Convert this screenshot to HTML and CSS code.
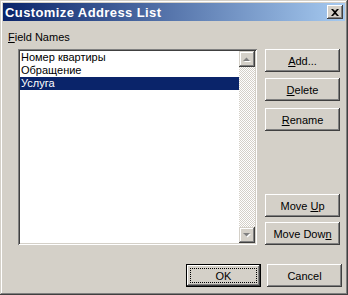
FILE: index.html
```html
<!DOCTYPE html>
<html lang="en">
<head>
    <meta charset="UTF-8">
    <title>Customize Address List</title>
    <link rel="stylesheet" href="styles.css">
</head>
<body>
    <div class="window">
        <div class="titlebar">
            <span class="title">Customize Address List</span>
            <button class="close-btn">
                <svg width="8" height="7" viewBox="0 0 8 7">
                    <path d="M0 0h2l2 2 2-2h2L5 3.5 8 7H6L4 5 2 7H0l3-3.5z" fill="#000"/>
                </svg>
            </button>
        </div>

        <div class="content">
            <div class="label"><u>F</u>ield Names</div>

            <div class="main-row">
                <div class="listbox">
                    <div class="items">
                        <div class="item">Номер квартиры</div>
                        <div class="item">Обращение</div>
                        <div class="item selected">Услуга</div>
                    </div>
                    <div class="scrollbar">
                        <div class="scroll-btn">
                            <svg width="8" height="5" viewBox="0 0 8 5">
                                <path d="M1 5h7L4.5 1.5z" fill="#fff"/>
                                <path d="M0 4h7L3.5 0.5z" fill="#808080"/>
                            </svg>
                        </div>
                        <div class="track"></div>
                        <div class="scroll-btn">
                            <svg width="8" height="5" viewBox="0 0 8 5">
                                <path d="M1 1h7L4.5 4.5z" fill="#fff"/>
                                <path d="M0 0h7L3.5 3.5z" fill="#808080"/>
                            </svg>
                        </div>
                    </div>
                </div>

                <div class="side-buttons">
                    <button class="btn"><u>A</u>dd...</button>
                    <button class="btn btn-delete"><u>D</u>elete</button>
                    <button class="btn btn-rename"><u>R</u>ename</button>
                    <div class="spacer"></div>
                    <button class="btn">Move <u>U</u>p</button>
                    <button class="btn btn-down">Move Dow<u>n</u></button>
                </div>
            </div>

            <div class="bottom-row">
                <button class="btn btn-default"><span class="focus">OK</span></button>
                <button class="btn">Cancel</button>
            </div>
        </div>
    </div>
</body>
</html>
```

FILE: styles.css
```css
* {
    margin: 0;
    padding: 0;
    box-sizing: border-box;
}

body {
    font-family: 'Liberation Sans', Arial, sans-serif;
    font-size: 11px;
    color: #000;
    background: #d4d0c8;
}

.window {
    width: 348px;
    height: 295px;
    padding: 3px;
    background: #d4d0c8;
    box-shadow: inset -1px -1px #404040, inset 1px 1px #d4d0c8,
                inset -2px -2px #808080, inset 2px 2px #fff;
}

.titlebar {
    height: 18px;
    display: flex;
    align-items: center;
    justify-content: space-between;
    padding: 0 2px 0 2px;
    background: linear-gradient(to right, #0a246a, #a6caf0);
}

.title {
    color: #fff;
    font-weight: bold;
    font-size: 13px;
    letter-spacing: 0.4px;
}

.close-btn {
    width: 16px;
    height: 14px;
    border: none;
    background: #d4d0c8;
    display: flex;
    align-items: center;
    justify-content: center;
    box-shadow: inset -1px -1px #404040, inset 1px 1px #fff,
                inset -2px -2px #808080, inset 2px 2px #d4d0c8;
}

.content {
    padding: 0 0 0 5px;
}

.label {
    margin-top: 10px;
    height: 13px;
    line-height: 13px;
}

.label u,
.btn u {
    text-decoration: underline;
    text-underline-offset: 1px;
}

.main-row {
    display: flex;
    margin-top: 5px;
}

.listbox {
    margin-left: 10px;
    width: 239px;
    height: 196px;
    padding: 2px;
    display: flex;
    background: #fff;
    box-shadow: inset 1px 1px #808080, inset -1px -1px #fff,
                inset 2px 2px #404040, inset -2px -2px #d4d0c8;
}

.items {
    flex: 1;
}

.item {
    height: 13px;
    line-height: 13px;
    padding-left: 1px;
    white-space: nowrap;
}

.item.selected {
    background: #0a246a;
    color: #fff;
}

.scrollbar {
    width: 16px;
    display: flex;
    flex-direction: column;
}

.scroll-btn {
    width: 16px;
    height: 16px;
    display: flex;
    align-items: center;
    justify-content: center;
    background: #d4d0c8;
    box-shadow: inset -1px -1px #404040, inset 1px 1px #d4d0c8,
                inset -2px -2px #808080, inset 2px 2px #fff;
}

.track {
    flex: 1;
    background: repeating-conic-gradient(#fff 0 25%, #d4d0c8 0 50%) 0 0 / 2px 2px;
}

.side-buttons {
    margin-left: 8px;
    width: 75px;
    height: 196px;
    display: flex;
    flex-direction: column;
}

.spacer {
    flex: 1;
}

.btn {
    width: 75px;
    height: 23px;
    border: none;
    background: #d4d0c8;
    font-family: 'Liberation Sans', Arial, sans-serif;
    font-size: 11px;
    color: #000;
    box-shadow: inset -1px -1px #404040, inset 1px 1px #fff,
                inset -2px -2px #808080, inset 2px 2px #d4d0c8;
}

.btn-delete {
    margin-top: 6px;
}

.btn-rename {
    margin-top: 7px;
}

.btn-down {
    margin-top: 5px;
}

.bottom-row {
    display: flex;
    justify-content: flex-end;
    gap: 6px;
    margin-top: 19px;
    padding-right: 3px;
}

.btn-default {
    display: flex;
    align-items: center;
    justify-content: center;
    box-shadow: inset 0 0 0 1px #000, inset -2px -2px #404040, inset 2px 2px #fff,
                inset -3px -3px #808080;
}

.focus {
    display: flex;
    align-items: center;
    justify-content: center;
    width: 67px;
    height: 15px;
    border: 1px dotted #000;
}
```
